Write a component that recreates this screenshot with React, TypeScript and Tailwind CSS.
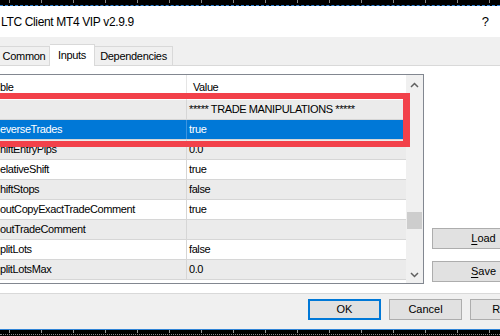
import React from "react";

type Row = {
  name: string;
  value: string;
  bg: string;
  selected?: boolean;
};

const rows: Row[] = [
  { name: "", value: "***** TRADE MANIPULATIONS *****", bg: "bg-[#ebebeb]" },
  { name: "everseTrades", value: "true", bg: "bg-[#0078d7]", selected: true },
  { name: "hiftEntryPips", value: "0.0", bg: "bg-[#ebebeb]" },
  { name: "elativeShift", value: "true", bg: "bg-white" },
  { name: "hiftStops", value: "false", bg: "bg-[#ebebeb]" },
  { name: "outCopyExactTradeComment", value: "true", bg: "bg-white" },
  { name: "outTradeComment", value: "", bg: "bg-[#ebebeb]" },
  { name: "plitLots", value: "false", bg: "bg-white" },
  { name: "plitLotsMax", value: "0.0", bg: "bg-[#ebebeb]" },
];

function Ticks({ color }: { color: string }) {
  return (
    <div className="flex pl-[9px]">
      {Array.from({ length: 16 }).map((_, i) => (
        <div key={i} className="w-[32px] shrink-0">
          <div className={`w-px h-[3px] ${color}`} />
        </div>
      ))}
    </div>
  );
}

export default function App() {
  return (
    <div className="relative w-[500px] h-[336px] overflow-hidden bg-[#f0f0f0] text-black text-[11px] font-['Liberation_Sans',Arial,sans-serif]">
      {/* top strip */}
      <div className="h-[5px] bg-black">
        <Ticks color="bg-[#8a8a8a]" />
      </div>
      <div className="h-px bg-black border-t border-dashed border-[#2f83d6]" />

      {/* title bar */}
      <div className="h-[31px] bg-white flex items-center justify-between pl-px pr-[11px]">
        <span className="text-[12px] tracking-[-0.35px]">LTC Client MT4 VIP v2.9.9</span>
        <span className="text-[13px]">?</span>
      </div>

      {/* tabs */}
      <div className="h-[28px] flex items-end tracking-[-0.3px]">
        <div className="ml-[-2px] w-[52px] h-[19px] border border-b-0 border-[#d9d9d9] bg-[#f0f0f0] flex items-center justify-center">
          Common
        </div>
        <div className="relative z-10 w-[45px] h-[22px] mb-[-1px] border border-b-0 border-l-0 border-[#d9d9d9] bg-white flex items-center justify-center">
          Inputs
        </div>
        <div className="w-[78px] h-[19px] border border-b-0 border-l-0 border-[#d9d9d9] bg-[#f0f0f0] flex items-center justify-center">
          Dependencies
        </div>
      </div>

      {/* tab page */}
      <div className="h-[229px] bg-white border-t border-b border-[#d9d9d9] flex items-start pt-[8px]">
        <div className="ml-[-1px] w-[425px] h-[210px] shrink-0 border border-[#828790] flex tracking-[-0.4px]">
          <div className="w-[406px] shrink-0 overflow-hidden">
            <div className="h-[25px] flex bg-white">
              <div className="w-[186px] shrink-0 flex items-center whitespace-nowrap">ble</div>
              <div className="flex-1 border-l border-[#e5e5e5] pl-[6px] flex items-center">Value</div>
            </div>
            {rows.map((r, i) => (
              <div
                key={i}
                className={`flex h-[20px] border-b border-[#d6d6d6] ${r.bg} ${r.selected ? "text-white" : "text-black"}`}
              >
                <div className="w-[186px] shrink-0 whitespace-nowrap flex items-center">{r.name}</div>
                <div
                  className={`flex-1 border-l ${r.selected ? "border-[#3d95e0]" : "border-[#d6d6d6]"} pl-[2px] flex items-center whitespace-nowrap`}
                >
                  {r.value}
                </div>
              </div>
            ))}
          </div>
          {/* scrollbar */}
          <div className="w-[17px] shrink-0 bg-[#f0f0f0] flex flex-col">
            <div className="h-[17px] flex items-center justify-center pt-[3px]">
              <svg width="9" height="6" viewBox="0 0 9 6">
                <path d="M1 5 L4.5 1.5 L8 5" stroke="#606060" strokeWidth="1.5" fill="none" />
              </svg>
            </div>
            <div className="flex-1 pt-[120px] flex justify-center">
              <div className="w-[15px] h-[17px] bg-[#cdcdcd]" />
            </div>
            <div className="h-[17px] flex items-center justify-center">
              <svg width="9" height="6" viewBox="0 0 9 6">
                <path d="M1 1 L4.5 4.5 L8 1" stroke="#606060" strokeWidth="1.5" fill="none" />
              </svg>
            </div>
          </div>
        </div>

        <div className="ml-[8px] mt-[154px] flex flex-col gap-[12px] shrink-0">
          <div className="w-[103px] h-[21px] bg-[#e1e1e1] border border-[#adadad] flex items-center justify-center">
            <span>
              <span className="underline underline-offset-2">L</span>oad
            </span>
          </div>
          <div className="w-[103px] h-[21px] bg-[#e1e1e1] border border-[#adadad] flex items-center justify-center">
            <span>
              <span className="underline underline-offset-2">S</span>ave
            </span>
          </div>
        </div>
      </div>

      {/* bottom bar */}
      <div className="h-[35px] flex items-start pl-[308px] pt-[5px] gap-[8px]">
        <div className="w-[73px] h-[21px] shrink-0 bg-[#e1e1e1] border-2 border-[#0078d7] flex items-center justify-center">
          OK
        </div>
        <div className="w-[73px] h-[21px] shrink-0 bg-[#e1e1e1] border border-[#adadad] flex items-center justify-center">
          Cancel
        </div>
        <div className="w-[73px] h-[21px] shrink-0 bg-[#e1e1e1] border border-[#adadad] flex items-center justify-center">
          Reset
        </div>
      </div>

      {/* bottom strip */}
      <div className="h-px bg-[#2f83d6]" />
      <div className="h-[6px] bg-black">
        <Ticks color="bg-[#9a9a9a]" />
        <div className="mt-px border-t border-dotted border-[#8a8a8a]" />
      </div>

      {/* red annotation box */}
      <div className="absolute left-[-10px] top-[93px] w-[420px] h-[54px] border-[6px] border-r-[7px] border-[#f2414a]" />
    </div>
  );
}
